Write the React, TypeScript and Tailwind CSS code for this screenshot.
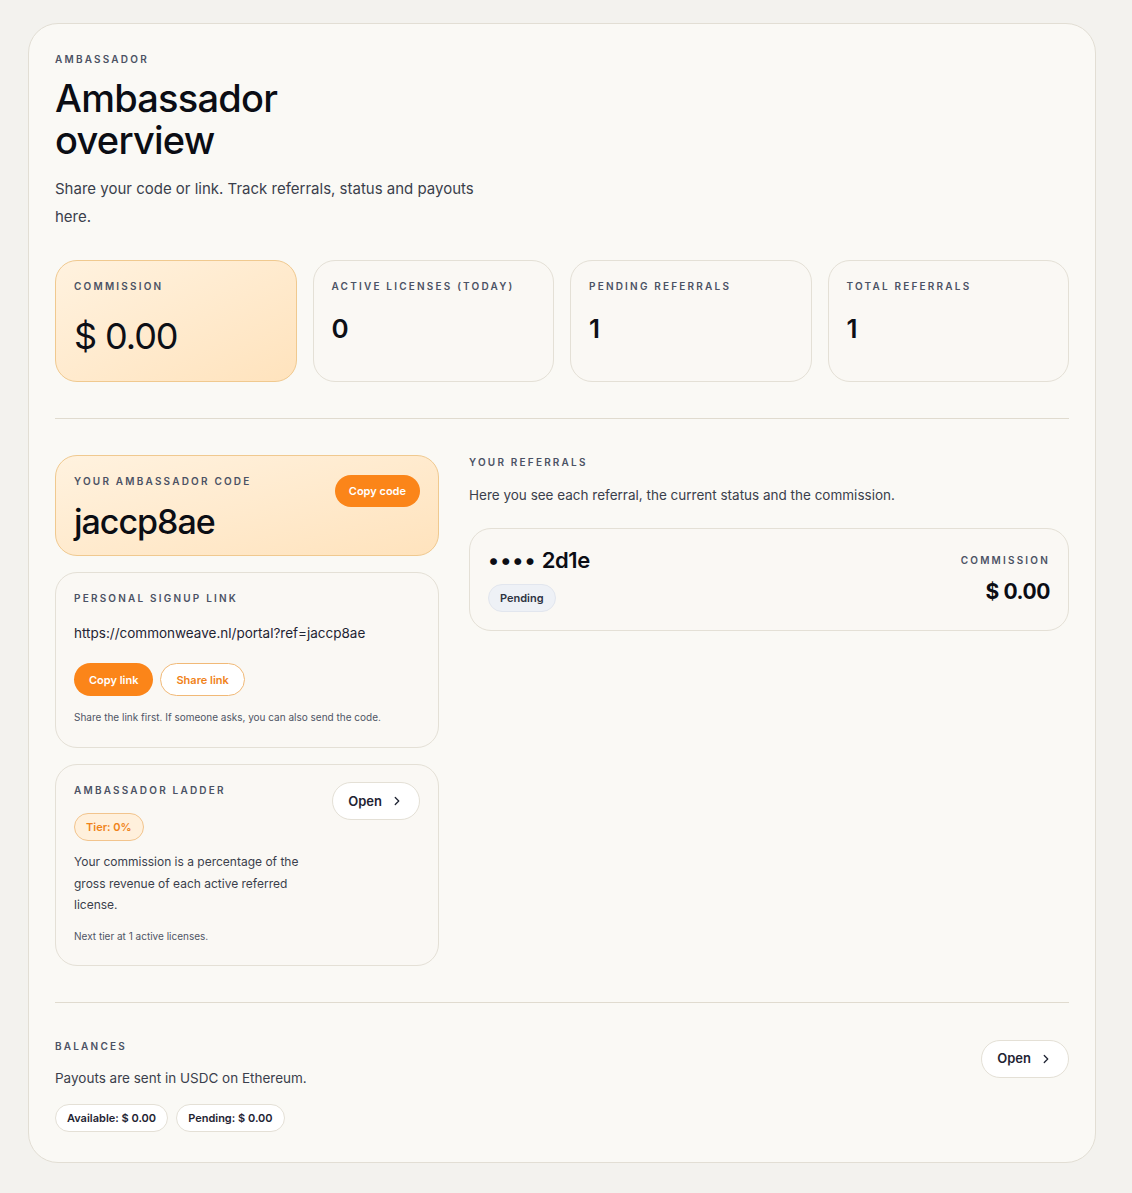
import { ChevronRight } from "lucide-react";

const Label = ({ children, className = "" }: { children: React.ReactNode; className?: string }) => (
  <p className={`text-[10px] font-semibold uppercase tracking-[0.22em] text-[#4b5264] ${className}`}>
    {children}
  </p>
);

const OpenButton = () => (
  <button className="flex h-[38px] items-center gap-2 rounded-full border border-[#e4e0d6] bg-white px-[15px] text-[13px] font-semibold text-[#1f2433]">
    Open
    <ChevronRight className="h-3.5 w-3.5" strokeWidth={2.2} />
  </button>
);

const StatCard = ({ label, value }: { label: string; value: string }) => (
  <div className="h-[122px] rounded-[22px] border border-[#e4e0d6] bg-[#faf8f4] px-[18px] pt-[18px]">
    <Label>{label}</Label>
    <p className="mt-[22px] text-[26px] font-semibold leading-none text-[#0d0f16]">{value}</p>
  </div>
);

export default function App() {
  return (
    <div
      className="min-h-[1193px] bg-[#f3f2ee] pl-[28px] pr-[36px] pt-[23px] pb-[29px]"
      style={{ fontFamily: '"Inter", "Noto Sans", sans-serif' }}
    >
      <div className="rounded-[30px] border border-[#e2ded4] bg-[#faf9f5] px-[26px] pt-[28px] pb-[30px]">
        <Label>Ambassador</Label>
        <h1 className="mt-[10px] max-w-[270px] text-[38px] font-medium leading-[42px] tracking-[-0.02em] text-[#0b0d14]">
          Ambassador overview
        </h1>
        <p className="mt-[14px] max-w-[430px] text-[15px] leading-[28px] text-[#3a3f4c]">
          Share your code or link. Track referrals, status and payouts here.
        </p>

        <div className="mt-[29px] grid grid-cols-4 gap-4">
          <div className="h-[122px] rounded-[22px] border border-[#f0c98f] bg-gradient-to-br from-[#fff2df] to-[#ffe3bd] px-[18px] pt-[18px]">
            <Label>Commission</Label>
            <p className="mt-[24px] text-[36px] font-normal leading-none tracking-[-0.03em] text-[#0d0f16]">$ 0.00</p>
          </div>
          <StatCard label="Active licenses (today)" value="0" />
          <StatCard label="Pending referrals" value="1" />
          <StatCard label="Total referrals" value="1" />
        </div>

        <div className="mt-[36px] h-px bg-[#e0dbcf]" />

        <div className="mt-[36px] flex gap-[30px]">
          <div className="flex w-[384px] shrink-0 flex-col gap-4">
            <div className="flex h-[101px] justify-between rounded-[22px] border border-[#f0c98f] bg-gradient-to-br from-[#fff2df] to-[#ffe3bd] pl-[18px] pr-[18px] pt-[18px]">
              <div>
                <Label>Your ambassador code</Label>
                <p className="mt-[16px] text-[34px] font-medium leading-none tracking-[-0.03em] text-[#0b0d14]">jaccp8ae</p>
              </div>
              <button className="mt-[1px] h-[32px] rounded-full bg-[#fb8519] px-[14px] text-[11px] font-semibold text-white">
                Copy code
              </button>
            </div>

            <div className="rounded-[22px] border border-[#e4e0d6] bg-[#faf8f4] px-[18px] pt-[18px] pb-[22px]">
              <Label>Personal signup link</Label>
              <p className="mt-[17px] text-[13.5px] text-[#1f2433]">https://commonweave.nl/portal?ref=jaccp8ae</p>
              <div className="mt-[20px] flex gap-[7px]">
                <button className="h-[33px] rounded-full bg-[#fb8519] px-[15px] text-[11px] font-semibold text-white">
                  Copy link
                </button>
                <button className="h-[33px] rounded-full border border-[#f1b977] bg-white px-[15px] text-[11px] font-semibold text-[#f08319]">
                  Share link
                </button>
              </div>
              <p className="mt-[14px] text-[10px] text-[#4f5565]">
                Share the link first. If someone asks, you can also send the code.
              </p>
            </div>

            <div className="rounded-[22px] border border-[#e4e0d6] bg-[#faf8f4] px-[18px] pt-[17px] pb-[21px]">
              <div className="flex justify-between">
                <div>
                  <Label className="mt-[1px]">Ambassador ladder</Label>
                  <span className="mt-[15px] inline-flex h-[28px] items-center rounded-full border border-[#f2c48d] bg-[#fff0dc] px-[11px] text-[11px] font-semibold text-[#f08319]">
                    Tier: 0%
                  </span>
                </div>
                <OpenButton />
              </div>
              <p className="mt-[10px] max-w-[240px] text-[12px] leading-[21.5px] text-[#3a3f4c]">
                Your commission is a percentage of the gross revenue of each active referred license.
              </p>
              <p className="mt-[13px] text-[10px] text-[#4f5565]">Next tier at 1 active licenses.</p>
            </div>
          </div>

          <div className="flex-1">
            <Label>Your referrals</Label>
            <p className="mt-[15px] text-[13.5px] text-[#3a3f4c]">
              Here you see each referral, the current status and the commission.
            </p>
            <div className="mt-[23px] flex h-[103px] justify-between rounded-[22px] border border-[#e4e0d6] bg-[#faf8f4] px-[18px] pt-[18px]">
              <div>
                <p className="text-[22px] font-semibold leading-[26px] tracking-[-0.02em] text-[#0b0d14]">
                  <span className="tracking-[0.05em]">••••</span> 2d1e
                </p>
                <span className="mt-[11px] inline-flex h-[28px] items-center rounded-full border border-[#e2e6ee] bg-[#eef1f6] px-[11px] text-[11px] font-semibold text-[#2d3342]">
                  Pending
                </span>
              </div>
              <div className="flex flex-col items-end pt-[6px]">
                <Label>Commission</Label>
                <p className="mt-[13px] text-[21px] font-bold leading-none tracking-[-0.02em] text-[#0b0d14]">$ 0.00</p>
              </div>
            </div>
          </div>
        </div>

        <div className="mt-[36px] h-px bg-[#e0dbcf]" />

        <div className="mt-[36px] flex justify-between">
          <div>
            <Label>Balances</Label>
            <p className="mt-[14px] text-[13.5px] text-[#3a3f4c]">Payouts are sent in USDC on Ethereum.</p>
            <div className="mt-[16px] flex gap-[8px]">
              <span className="inline-flex h-[28px] items-center rounded-full border border-[#e4e0d6] bg-white px-[11px] text-[11px] font-semibold text-[#1f2433]">
                Available: $ 0.00
              </span>
              <span className="inline-flex h-[28px] items-center rounded-full border border-[#e4e0d6] bg-white px-[11px] text-[11px] font-semibold text-[#1f2433]">
                Pending: $ 0.00
              </span>
            </div>
          </div>
          <div className="pt-[1px]">
            <OpenButton />
          </div>
        </div>
      </div>
    </div>
  );
}
